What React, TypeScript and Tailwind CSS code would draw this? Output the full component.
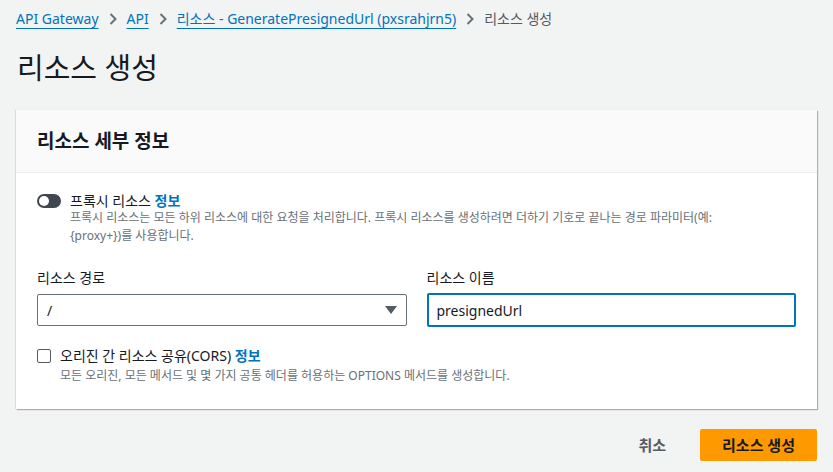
import React from "react";

const font = { fontFamily: '"Noto Sans", "Noto Sans CJK KR", sans-serif' };

function Chevron() {
  return (
    <svg width="10" height="14" viewBox="0 0 10 14" className="mx-[9px] shrink-0">
      <path d="M2.5 2 L7.5 7 L2.5 12" fill="none" stroke="#687078" strokeWidth="2" />
    </svg>
  );
}

export default function App() {
  return (
    <div className="min-h-[472px] bg-[#f2f3f3] px-4 text-[#16191f]" style={font}>
      {/* breadcrumb */}
      <nav className="flex h-[37px] items-center text-[14px]">
        <a className="text-[#0073bb] underline underline-offset-4">API Gateway</a>
        <Chevron />
        <a className="text-[#0073bb] underline underline-offset-4">API</a>
        <Chevron />
        <a className="text-[#0073bb] underline underline-offset-4">
          리소스 - GeneratePresignedUrl (pxsrahjrn5)
        </a>
        <Chevron />
        <span className="text-[#545b64]">리소스 생성</span>
      </nav>

      <h1 className="mt-[11px] pl-px text-[29px] leading-[40px] font-normal">리소스 생성</h1>

      {/* card */}
      <div className="mt-[22px] bg-white shadow-[1px_1px_1px_rgba(0,28,36,0.3),-1px_0_1px_rgba(0,28,36,0.1)]">
        <div className="flex h-[63px] items-center border-b border-[#eaeded] bg-[#fafafa] px-[21px]">
          <h2 className="text-[19px] font-bold">리소스 세부 정보</h2>
        </div>

        <div className="px-[21px] pt-[20px] pb-[23px]">
          {/* proxy toggle */}
          <div className="flex gap-[9px]">
            <div className="mt-[1px] flex h-[14px] w-[24px] shrink-0 items-center rounded-full bg-[#414750] pl-[2px]">
              <div className="h-[10px] w-[10px] rounded-full bg-white" />
            </div>
            <div>
              <div className="h-[16px] text-[14px] leading-[16px]">
                프록시 리소스 <a className="font-bold text-[#0073bb]">정보</a>
              </div>
              <div className="h-[18px] text-[12px] leading-[18px] text-[#687078]">
                프록시 리소스는 모든 하위 리소스에 대한 요청을 처리합니다. 프록시 리소스를 생성하려면 더하기 기호로 끝나는 경로 파라미터(예:
              </div>
              <div className="h-[18px] text-[12px] leading-[18px] text-[#687078]">
                {"{proxy+}"})를 사용합니다.
              </div>
            </div>
          </div>

          {/* path + name */}
          <div className="mt-[23px] grid grid-cols-2 gap-5">
            <div>
              <label className="block h-[20px] text-[14px] leading-[20px]">리소스 경로</label>
              <div className="mt-[6px] flex h-[32px] items-center justify-between rounded-[2px] border border-[#687078] px-[9px] text-[14px]">
                <span>/</span>
                <svg width="12" height="8" viewBox="0 0 12 8">
                  <path d="M0 0 H12 L6 8 Z" fill="#545b64" />
                </svg>
              </div>
            </div>
            <div>
              <label className="block h-[20px] text-[14px] leading-[20px]">리소스 이름</label>
              <div className="mt-[5px] flex h-[34px] items-center rounded-[2px] border-2 border-[#0073bb] px-[8px] text-[14px]">
                presignedUrl
              </div>
            </div>
          </div>

          {/* cors */}
          <div className="mt-[19px] flex gap-[9px]">
            <div className="mt-[3px] h-[14px] w-[14px] shrink-0 rounded-[2px] border border-[#545b64] bg-white" />
            <div>
              <div className="h-[20px] text-[14px] leading-[20px]">
                오리진 간 리소스 공유(CORS) <a className="font-bold text-[#0073bb]">정보</a>
              </div>
              <div className="h-[20px] text-[12px] leading-[20px] text-[#687078]">
                모든 오리진, 모든 메서드 및 몇 가지 공통 헤더를 허용하는 OPTIONS 메서드를 생성합니다.
              </div>
            </div>
          </div>
        </div>
      </div>

      {/* actions */}
      <div className="mt-[20px] flex items-center justify-end gap-[14px]">
        <button className="h-[32px] px-[20px] text-[15px] font-bold text-[#545b64]">취소</button>
        <button className="h-[32px] w-[117px] rounded-[2px] bg-[#ff9900] text-[15px] font-bold text-[#16191f]">
          리소스 생성
        </button>
      </div>
    </div>
  );
}
